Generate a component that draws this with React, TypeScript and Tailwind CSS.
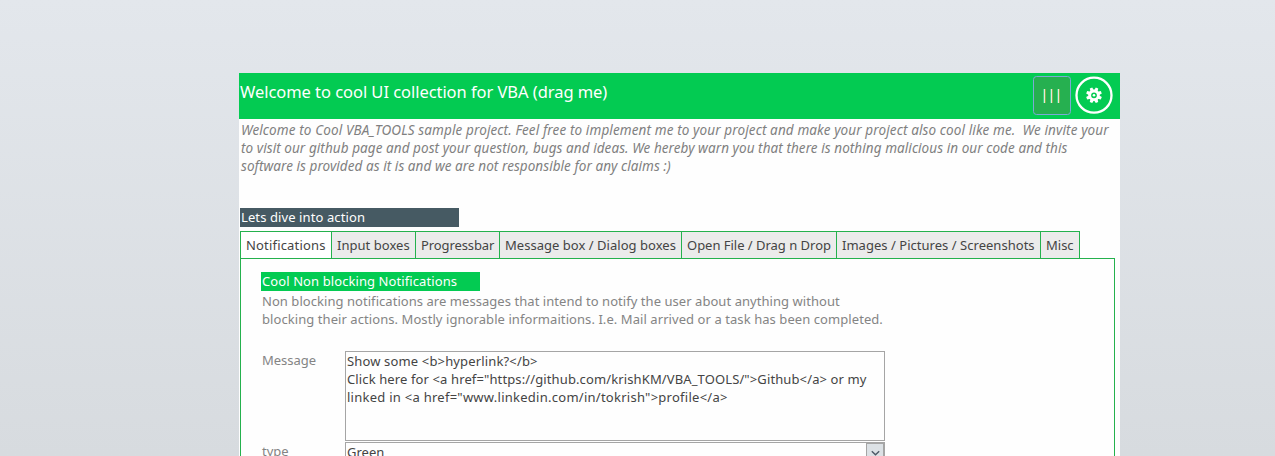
import type { ReactNode } from "react";

function Line({ children, className = "" }: { children: ReactNode; className?: string }) {
  return <div className={`whitespace-pre ${className}`}>{children}</div>;
}

const tabs = [
  { label: "Notifications", className: "w-[92px] border-l bg-white tracking-[0.18px]" },
  { label: "Input boxes", className: "w-[84px] bg-[#ebebeb] tracking-[0.03px]" },
  { label: "Progressbar", className: "w-[84px] bg-[#ebebeb] tracking-[-0.1px]" },
  { label: "Message box / Dialog boxes", className: "w-[182px] bg-[#ebebeb] tracking-[0.03px]" },
  { label: "Open File / Drag n Drop", className: "w-[155px] bg-[#ebebeb] tracking-[-0.02px]" },
  { label: "Images / Pictures / Screenshots", className: "w-[204px] bg-[#ebebeb] tracking-[0.03px]" },
  { label: "Misc", className: "w-[39px] bg-[#ebebeb]" },
];

function MenuBars() {
  return (
    <svg width="38" height="39" viewBox="0 0 38 39">
      <rect x="0.5" y="0.5" width="37" height="38" rx="3" fill="#26b050" stroke="#7ca9d5" />
      {[10, 17, 24].map((x) => (
        <g key={x}>
          <rect x={x} y="13" width="1" height="14" fill="#36d888" />
          <rect x={x + 1} y="13" width="1" height="14" fill="#e9e7d4" />
          <rect x={x + 2} y="13" width="0.6" height="14" fill="#bdb346" />
        </g>
      ))}
    </svg>
  );
}

function GearBadge() {
  return (
    <svg width="38" height="39" viewBox="0 0 38 39">
      <circle cx="19" cy="19.2" r="17.5" fill="none" stroke="#fff" strokeWidth="2.3" />
      <g transform="translate(19 19.3)">
        {[22.5, 67.5, 112.5, 157.5, 202.5, 247.5, 292.5, 337.5].map((a) => (
          <path key={a} d="M-1.9 -4.5L-1.3 -7.9H1.3L1.9 -4.5Z" fill="#fff" transform={`rotate(${a})`} />
        ))}
        <circle r="4.3" fill="none" stroke="#fff" strokeWidth="2.8" />
        <circle r="1.3" fill="#fff" />
      </g>
    </svg>
  );
}

export default function App() {
  return (
    <div className="flex h-[456px] w-[1275px] overflow-hidden bg-linear-to-b from-[#e3e7ec] to-[#d7dbdf] pt-[73px] pl-[239px] font-['Noto_Sans',sans-serif] text-[13px] leading-[18px] text-[#444]">
      <main className="h-[400px] w-[881px] shrink-0 bg-[#fefefe]">
        <header className="flex h-[46px] items-start justify-between bg-[#03cb52] pr-[7px] text-white">
          <h1 className="pt-[7px] pl-px text-[16.5px] leading-[24px] tracking-[-0.05px] whitespace-pre">
            Welcome to cool UI collection for VBA (drag me)
          </h1>
          <div className="flex gap-[4px] pt-[3px]">
            <MenuBars />
            <GearBadge />
          </div>
        </header>

        <section className="h-[89px] pt-[2px] pl-[2px] text-[13.5px] text-[#808080] italic">
          <Line className="tracking-[0.12px]">{"Welcome to Cool VBA_TOOLS sample project. Feel free to implement me to your project and make your project also cool like me.  We invite your"}</Line>
          <Line className="tracking-[0.07px]">to visit our github page and post your question, bugs and ideas. We hereby warn you that there is nothing malicious in our code and this</Line>
          <Line className="tracking-[0.06px]">software is provided as it is and we are not responsible for any claims :)</Line>
        </section>

        <div className="ml-px h-[19px] w-[219px] bg-[#465a63] pl-px leading-[19px] tracking-[0.1px] text-white">Lets dive into action</div>

        <nav className="mt-[4px] ml-px flex h-[27px]">
          {tabs.map((tab) => (
            <div key={tab.label} className={`border-t border-r border-[#24b14d] pl-[5px] leading-[27px] whitespace-pre ${tab.className}`}>
              {tab.label}
            </div>
          ))}
        </nav>

        <section className="ml-px h-[210px] w-[875px] border border-[#24b14d] pt-[13px] pl-[20px]">
          <div className="h-[19px] w-[219px] bg-[#03cb52] pl-px leading-[19px] tracking-[0.09px] text-white">Cool Non blocking Notifications</div>
          <div className="pt-px pl-px text-[#848484]">
            <Line className="tracking-[0.05px]">Non blocking notifications are messages that intend to notify the user about anything without</Line>
            <Line className="tracking-[0.07px]">blocking their actions. Mostly ignorable informaitions. I.e. Mail arrived or a task has been completed.</Line>
          </div>
          <div className="mt-[23px] flex">
            <div className="w-[84px] pl-px text-[#848484]">Message</div>
            <div className="h-[90px] w-[540px] border border-[#a5a5a5] pl-px">
              <Line className="tracking-[0.15px]">{"Show some <b>hyperlink?</b>"}</Line>
              <Line className="tracking-[0.12px]">{'Click here for <a href="https://github.com/krishKM/VBA_TOOLS/">Github</a> or my'}</Line>
              <Line className="tracking-[0.26px]">{'linked in <a href="www.linkedin.com/in/tokrish">profile</a>'}</Line>
            </div>
          </div>
          <div className="mt-px flex">
            <div className="w-[84px] pl-px text-[#848484]">type</div>
            <div className="flex h-[22px] w-[540px] justify-between border border-[#a5a5a5] pl-px">
              <span>Green</span>
              <div className="flex w-[18px] justify-center border border-[#a5a5a5] bg-[#dce1e5] pt-[6px]">
                <svg width="9" height="7" viewBox="0 0 9 7">
                  <path d="M0.8 1.3L4.5 4.8L8.2 1.3" fill="none" stroke="#4c5866" strokeWidth="1.4" />
                </svg>
              </div>
            </div>
          </div>
        </section>
      </main>
    </div>
  );
}
